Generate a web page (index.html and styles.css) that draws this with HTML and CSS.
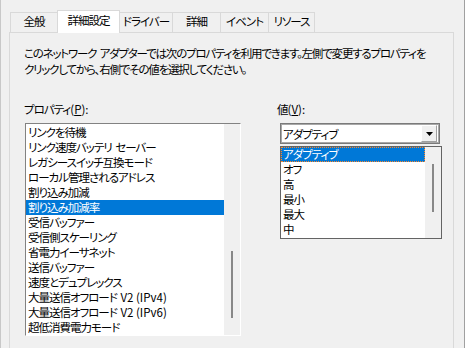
FILE: index.html
```html
<!DOCTYPE html>
<html lang="ja">
<head>
    <meta charset="UTF-8">
    <title>詳細設定</title>
    <link rel="stylesheet" href="styles.css">
</head>
<body>
    <div class="dialog">
        <div class="tabs">
            <div class="tab tab-general">全般</div>
            <div class="tab tab-advanced active">詳細設定</div>
            <div class="tab tab-driver">ドライバー</div>
            <div class="tab tab-details">詳細</div>
            <div class="tab tab-events">イベント</div>
            <div class="tab tab-resources">リソース</div>
        </div>

        <div class="page">
            <p class="intro">このネットワーク アダプターでは次のプロパティを利用できます。左側で変更するプロパティを<br>クリックしてから、右側でその値を選択してください。</p>

            <div class="fields">
                <div class="prop-col">
                    <div class="label">プロパティ<span class="latin">(<u>P</u>):</span></div>
                    <div class="listbox">
                        <ul class="items">
                            <li>リンクを待機</li>
                            <li>リンク速度バッテリ セーバー</li>
                            <li>レガシースイッチ互換モード</li>
                            <li>ローカル管理されるアドレス</li>
                            <li>割り込み加減</li>
                            <li class="sel">割り込み加減率</li>
                            <li>受信バッファー</li>
                            <li>受信側スケーリング</li>
                            <li>省電力イーサネット</li>
                            <li>送信バッファー</li>
                            <li>速度とデュプレックス</li>
                            <li>大量送信オフロード <span class="latin">V2 (IPv4)</span></li>
                            <li>大量送信オフロード <span class="latin">V2 (IPv6)</span></li>
                            <li>超低消費電力モード</li>
                        </ul>
                        <div class="scrollbar"><div class="thumb thumb-props"></div></div>
                    </div>
                </div>

                <div class="value-col">
                    <div class="label">値<span class="latin">(<u>V</u>):</span></div>
                    <div class="combo">
                        <span class="combo-text">アダプティブ</span>
                        <span class="combo-btn">
                            <svg width="7" height="4" viewBox="0 0 7 4"><path d="M0 0h7L3.5 4z" fill="#000"/></svg>
                        </span>
                    </div>
                    <div class="dropdown">
                        <ul class="items">
                            <li class="sel focus">アダプティブ</li>
                            <li>オフ</li>
                            <li>高</li>
                            <li>最小</li>
                            <li>最大</li>
                            <li>中</li>
                        </ul>
                        <div class="scrollbar"><div class="thumb thumb-values"></div></div>
                    </div>
                </div>
            </div>
        </div>
    </div>
</body>
</html>
```

FILE: styles.css
```css
* {
    box-sizing: border-box;
}

body {
    margin: 0;
    background-color: #f0f0f0;
    color: #000;
    font-family: "Noto Sans CJK JP", sans-serif;
    font-size: 11.5px;
    letter-spacing: -1px;
    word-spacing: 2px;
    font-feature-settings: "palt";
}

.latin {
    letter-spacing: 0;
    word-spacing: 0;
}

.dialog {
    width: 465px;
    height: 348px;
    overflow: hidden;
    border-left: 1px solid #c8c8c8;
    border-right: 1px solid #a0a0a0;
    padding: 0 10px 0 8px;
}

/* tab strip */
.tabs {
    display: flex;
    align-items: flex-end;
    height: 32px;
    padding-left: 2px;
}

.tab {
    height: 20px;
    margin-left: -1px;
    border: 1px solid #d9d9d9;
    border-bottom: none;
    background-color: #f0f0f0;
    text-align: center;
    line-height: 17px;
    white-space: nowrap;
}

.tab.active {
    position: relative;
    height: 23px;
    margin-bottom: -1px;
    background-color: #fff;
    line-height: 18px;
}

.tab-general { width: 48px; }
.tab-advanced { width: 63px; }
.tab-driver { width: 54px; }
.tab-details { width: 49px; }
.tab-events { width: 49px; }
.tab-resources { width: 47px; }

/* page body */
.page {
    height: 330px;
    border: 1px solid #d9d9d9;
    padding: 12px 0 0 14px;
}

.intro {
    margin: 0;
    line-height: 16px;
    letter-spacing: -1.2px;
    white-space: nowrap;
}

.fields {
    display: flex;
    margin-top: 24px;
}

.label {
    height: 16px;
    line-height: 16px;
    margin-bottom: 6px;
}

.prop-col {
    width: 217px;
}

.value-col {
    margin-left: 36px;
}

.items {
    flex: 1;
    list-style: none;
    margin: 0;
    padding: 0;
}

.items li {
    height: 15px;
    line-height: 15px;
    padding-left: 2px;
    white-space: nowrap;
}

.items li.sel {
    background-color: #0078d7;
    color: #fff;
}

.items li.focus {
    outline: 1px dotted #ff8728;
    outline-offset: -1px;
}

.listbox {
    display: flex;
    width: 216px;
    height: 213px;
    margin-left: 1px;
    border: 1px solid;
    border-color: #828282 #fff #fff #828282;
    background-color: #fff;
}

.listbox .items {
    padding-top: 1px;
}

.scrollbar {
    width: 16px;
    display: flex;
    flex-direction: column;
    align-items: center;
    background-color: #f0f0f0;
}

.thumb {
    width: 2px;
    background-color: #888;
}

.thumb-props {
    margin-top: 127px;
    height: 67px;
}

.thumb-values {
    margin-top: 17px;
    height: 48px;
}

/* combo box, opened */
.combo {
    display: flex;
    align-items: center;
    width: 160px;
    height: 21px;
    margin-left: 3px;
    border: 1px solid #7a7a7a;
    box-shadow: inset 0 0 0 1px #a8a8a8;
    background-color: #fff;
}

.combo-text {
    flex: 1;
    padding-left: 2px;
}

.combo-btn {
    display: flex;
    align-items: center;
    justify-content: center;
    width: 16px;
    height: 17px;
    margin-right: 2px;
    border: 1px solid;
    border-color: #fff #a0a0a0 #a0a0a0 #fff;
    background-color: #f0f0f0;
}

.dropdown {
    display: flex;
    width: 162px;
    height: 93px;
    margin: 2px 0 0 3px;
    border: 1px solid #646464;
    background-color: #fff;
}
```
